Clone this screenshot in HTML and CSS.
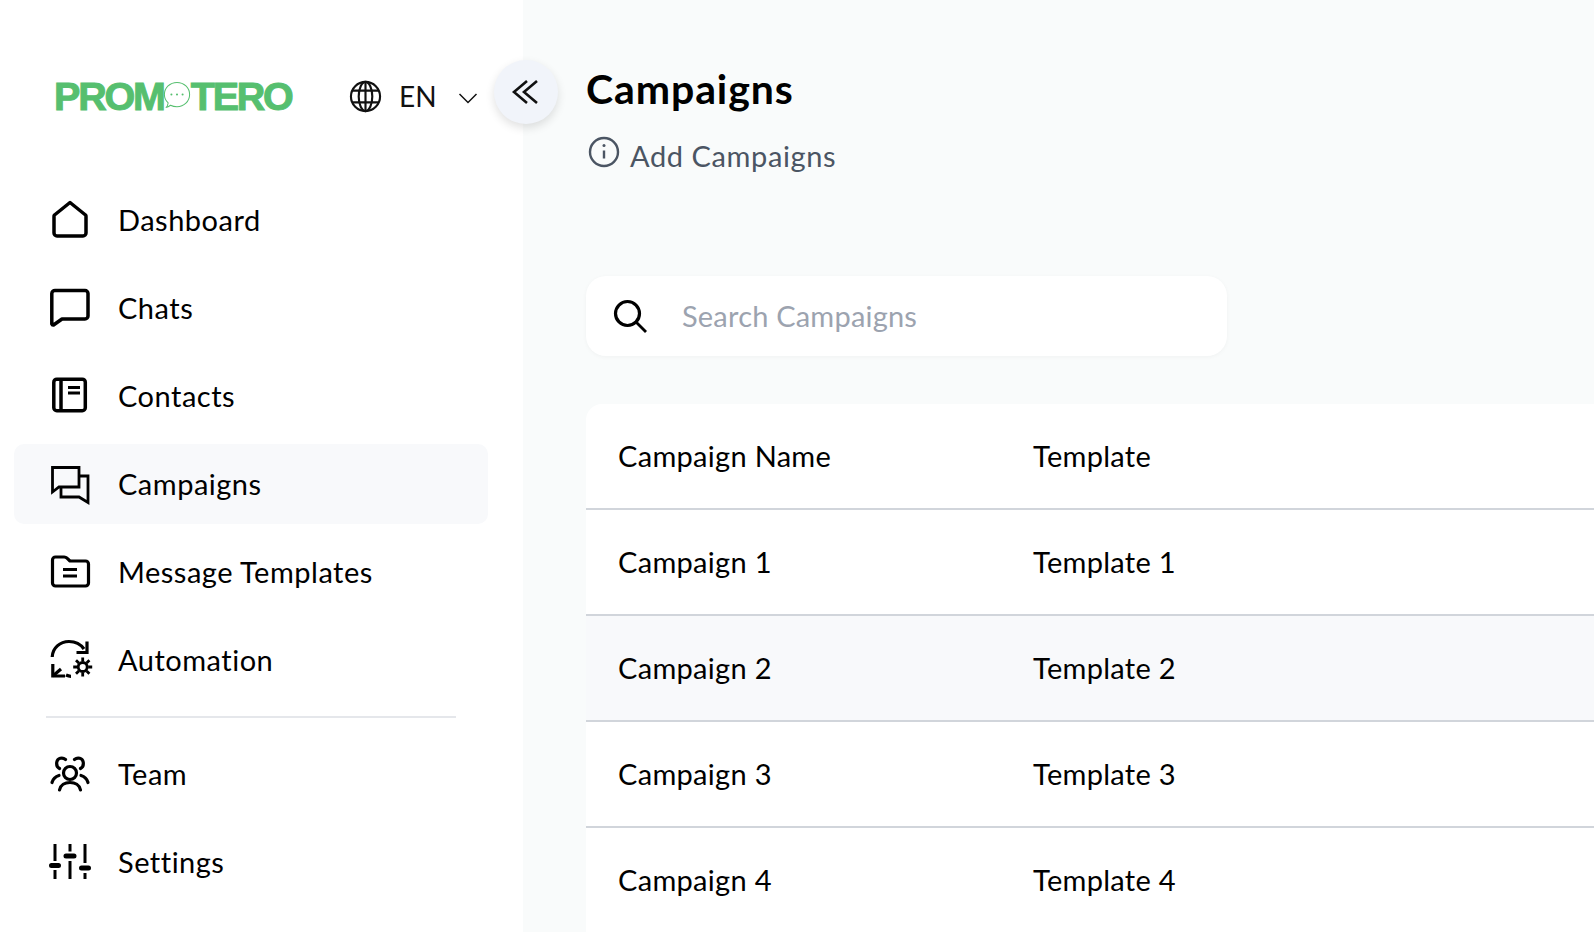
FILE: index.html
```html
<!DOCTYPE html>
<html lang="en">
<head>
<meta charset="utf-8">
<title>Campaigns</title>
<link rel="stylesheet" href="styles.css">
</head>
<body>
<div class="app">
  <aside class="sidebar">
    <header class="brand">
      <div class="logo"><span>PROM</span><svg class="logo-o" viewBox="0 0 30 30" fill="none"><path d="M3 28.500 C6 27.800 7 26.800 8 26 C10 27 12.500 27.600 15 27.600 C22.500 27.600 28.500 21.800 28.500 14.500 C28.500 7.300 22.500 1.500 15 1.500 C7.500 1.500 1.500 7.300 1.500 14.500 C1.500 18 3 21.200 5.500 23.500 C5.300 25.300 4.500 27.300 3 28.500 Z" stroke="#56bf6f" stroke-width="1.100"/><circle cx="9" cy="14.500" r="1.100" fill="#56bf6f"/><circle cx="15" cy="14.500" r="1.100" fill="#56bf6f"/><circle cx="21" cy="14.500" r="1.100" fill="#56bf6f"/></svg><span>TERO</span></div>
      <div class="lang">
        <svg class="globe" viewBox="0 0 34 34" fill="none" stroke="#111" stroke-width="2.200"><circle cx="17" cy="17" r="15"/><ellipse cx="17" cy="17" rx="7" ry="15"/><path d="M17 2v30M3.500 11h27M3.500 23h27"/></svg>
        <span>EN</span>
        <svg class="chev" viewBox="0 0 20 12" fill="none" stroke="#111" stroke-width="1.500"><path d="M1.500 2l8.500 8.500 8.500-8.500"/></svg>
      </div>
    </header>
    <nav class="nav">
      <a class="nav-item"><svg viewBox="0 0 42 42" fill="none" stroke="#000" stroke-width="3.500" stroke-linejoin="round"><path d="M21 3.500 L36.500 16 a2 2 0 0 1 .5 1.500 V34 a3 3 0 0 1-3 3 H8 a3 3 0 0 1-3-3 V17.500 a2 2 0 0 1 .5-1.500 Z"/></svg><span>Dashboard</span></a>
      <a class="nav-item"><svg viewBox="0 0 42 42" fill="none" stroke="#000" stroke-width="3.500" stroke-linejoin="round"><path d="M6 3.500 H36 a3 3 0 0 1 3 3 V29 a3 3 0 0 1-3 3 H13 L4.500 38 A1.500 1.500 0 0 1 2.800 37 V6.500 a3.200 3.200 0 0 1 3.200-3 Z"/></svg><span>Chats</span></a>
      <a class="nav-item"><svg viewBox="0 0 42 42" fill="none" stroke="#000" stroke-width="3.500" stroke-linejoin="round"><rect x="4.800" y="4.200" width="31.500" height="31.500" rx="3"/><path d="M12 4v32"/><path d="M19 12.500h12M19 18h12" stroke-width="3"/></svg><span>Contacts</span></a>
      <a class="nav-item active"><svg viewBox="0 0 42 42" fill="none" stroke="#000" stroke-width="2.800" stroke-linejoin="miter"><path d="M3.500 4.500 H30 V24 H10 L3.500 29 Z"/><path d="M30 13 H39 V39.500 L30 34 H12 V24"/></svg><span>Campaigns</span></a>
      <a class="nav-item"><svg viewBox="0 0 42 42" fill="none" stroke="#000" stroke-width="3.200" stroke-linejoin="round"><path d="M3.500 9 a3 3 0 0 1 3-3 H15 a4 4 0 0 1 3 1.200 L21 10 H36.500 a3 3 0 0 1 3 3 V32 a3 3 0 0 1-3 3 H6.500 a3 3 0 0 1-3-3 Z"/><path d="M14 18.500h14M14 25h14"/></svg><span>Message Templates</span></a>
      <a class="nav-item"><svg viewBox="0 0 42 42" fill="none" stroke="#000" stroke-width="3.200"><path d="M3.200 18 C3.500 9 11 2.500 20 2.500 C26 2.500 31.500 5 35 10"/><path d="M38 2.600 V13.500 H27.500"/><path d="M3.800 25 V37 H16"/><path d="M3.800 37 L12 30"/><path d="M17 36 C19 37 20.500 37.300 22 37.300"/><circle cx="33.700" cy="28" r="4.500" stroke-width="2.800"/><path d="M33.700 18.500v4M33.700 33.500v4M24.200 28h4M39.200 28h4M27 21.300l2.800 2.800M37.600 31.900l2.800 2.800M40.400 21.300l-2.800 2.800M29.800 31.900L27 34.700" stroke-width="2.800"/></svg><span>Automation</span></a>
      <hr class="divider">
      <a class="nav-item"><svg viewBox="0 0 42 42" fill="none" stroke="#000" stroke-width="3.200" stroke-linecap="round"><circle cx="21" cy="20" r="6.500"/><path d="M10.500 37 C11.500 32 16 29.500 21 29.500 C26 29.500 30.500 32 31.500 37"/><path d="M16.500 6.500 C13.500 4 8.500 5 7.800 9 C7.300 12 8.500 14.500 10.500 15.500"/><path d="M25.500 6.500 C28.500 4 33.500 5 34.200 9 C34.700 12 33.500 14.500 31.500 15.500"/><path d="M3 29.500 C4 26 6.500 23.500 10 22.500"/><path d="M39 29.500 C38 26 35.500 23.500 32 22.500"/></svg><span>Team</span></a>
      <a class="nav-item"><svg viewBox="0 0 42 42" fill="none" stroke="#000" stroke-width="3"><path d="M6 3v17M6 29v9M21 3v7.500M21 20v18M36 3v19M36 32v6"/><path d="M2.500 24.500h7M17 15h8M32.500 27h7" stroke-width="5" stroke-linecap="round"/></svg><span>Settings</span></a>
    </nav>
    <button class="collapse" aria-label="Collapse"><svg viewBox="0 0 30 26" fill="none" stroke="#111" stroke-width="2.600"><path d="M17 2 L4 13 L17 24M27 2 L14 13 L27 24"/></svg></button>
  </aside>
  <main class="main">
    <h1 class="title">Campaigns</h1>
    <div class="sub">
      <svg viewBox="0 0 32 32" fill="none" stroke="#4b5563" stroke-width="2.400"><circle cx="16" cy="16" r="14"/><path d="M16 14.500v8"/><circle cx="16" cy="9.500" r="1.500" fill="#4b5563" stroke="none"/></svg>
      <span>Add Campaigns</span>
    </div>
    <div class="search">
      <svg viewBox="0 0 34 34" fill="none" stroke="#000" stroke-width="3.200"><circle cx="14.500" cy="14.500" r="12"/><path d="M23.500 23.500L33 33" stroke-width="2.800"/></svg>
      <span>Search Campaigns</span>
    </div>
    <div class="table">
      <div class="row"><div class="col1">Campaign Name</div><div>Template</div></div>
      <div class="row"><div class="col1">Campaign 1</div><div>Template 1</div></div>
      <div class="row alt"><div class="col1">Campaign 2</div><div>Template 2</div></div>
      <div class="row"><div class="col1">Campaign 3</div><div>Template 3</div></div>
      <div class="row"><div class="col1">Campaign 4</div><div>Template 4</div></div>
    </div>
  </main>
</div>
</body>
</html>
```
FILE: styles.css
```css
* { box-sizing: border-box; }
html, body { margin: 0; height: 100%; overflow: hidden; }
body { font-family: "Lato", "Noto Sans", sans-serif; color: #000; background: #f9fbfb; }
.app { display: flex; height: 932px; }
.sidebar { position: relative; width: 523px; flex: none; background: #fff; padding: 0 14px; }
.brand { display: flex; align-items: center; height: 96px; margin-top: 48px; padding-left: 40px; }
.logo { display: flex; align-items: center; flex: none; width: 240px; color: #56bf6f; font-family: "Liberation Sans", sans-serif; font-weight: 700; font-size: 39.500px; letter-spacing: -2.200px; -webkit-text-stroke: 1px #56bf6f; }
.logo-o { width: 28px; height: 30px; margin: -2px 0 0 -1px; flex: none; }
.lang { display: flex; align-items: center; margin-left: 55px; font-size: 28px; letter-spacing: .2px; color: #111; }
.globe { width: 33px; height: 33px; margin-right: 17px; }
.chev { width: 20px; height: 12px; margin: 3px 0 0 21px; }
.nav { display: flex; flex-direction: column; margin-top: 36px; width: 474px; }
.nav-item { display: flex; align-items: center; height: 80px; margin-bottom: 8px; border-radius: 10px; padding-left: 35px; font-size: 29px; letter-spacing: .5px; }
.nav-item span { margin-bottom: 2px; }
.nav-item svg { width: 42px; height: 42px; flex: none; margin-right: 27px; overflow: visible; }
.active { background: #f8f9fb; }
.divider { width: 410px; margin: 8px 0 16px 32px; border: 0; border-top: 2px solid #e5e7eb; }
.collapse { position: absolute; left: 494px; top: 60px; width: 64px; height: 64px; padding: 0; border: 0; border-radius: 50%; background: #f1f4fa; box-shadow: 0 4px 10px rgba(0,0,0,.12); display: flex; align-items: center; justify-content: center; }
.collapse svg { width: 30px; height: 26px; margin-left: -2px; }
.main { flex: 1; padding: 0 0 0 63px; min-width: 0; }
.title { margin: 65px 0 0; font-size: 41px; letter-spacing: .9px; line-height: 48px; font-weight: 700; color: #000; }
.sub { display: flex; align-items: center; margin-top: 23px; font-size: 29px; letter-spacing: .6px; color: #4b5563; height: 40px; }
.sub span { margin-bottom: 2px; }
.sub svg { width: 32px; height: 32px; margin: -8px 10px 0 2px; }
.search { display: flex; align-items: center; width: 641px; height: 80px; margin-top: 100px; padding-left: 27px; border-radius: 20px; background: #fff; box-shadow: 0 1px 4px rgba(0,0,0,.04); font-size: 29px; letter-spacing: .2px; color: #9ca3af; }
.search span { margin-bottom: 2px; }
.search svg { width: 34px; height: 34px; margin-right: 35px; }
.table { margin-top: 48px; background: #fff; border-radius: 16px 0 0 0; }
.row { display: flex; align-items: center; height: 106px; padding: 0 0 2px 32px; border-bottom: 2px solid #d1d5db; font-size: 29px; letter-spacing: .3px; }
.alt { background: #f8f9fb; }
.col1 { width: 415px; }
```
